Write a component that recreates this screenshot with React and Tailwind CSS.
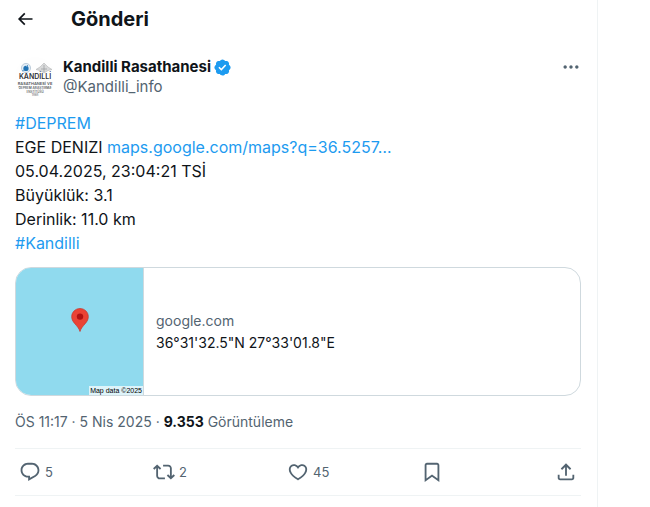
const ICONS = {
  back: "M7.414 13l5.043 5.04-1.414 1.42L3.586 12l7.457-7.46 1.414 1.42L7.414 11H21v2H7.414z",
  more: "M3 12c0-1.1.9-2 2-2s2 .9 2 2-.9 2-2 2-2-.9-2-2zm9 2c1.1 0 2-.9 2-2s-.9-2-2-2-2 .9-2 2 .9 2 2 2zm7 0c1.1 0 2-.9 2-2s-.9-2-2-2-2 .9-2 2 .9 2 2 2z",
  reply:
    "M1.751 10c0-4.42 3.584-8 8.005-8h4.366c4.49 0 8.129 3.64 8.129 8.13 0 2.96-1.607 5.68-4.196 7.11l-8.054 4.46v-3.69h-.067c-4.49.1-8.183-3.51-8.183-8.01zm8.005-6c-3.317 0-6.005 2.69-6.005 6 0 3.37 2.77 6.08 6.138 6.01l.351-.01h1.761v2.3l5.087-2.81c1.951-1.08 3.163-3.13 3.163-5.36 0-3.39-2.744-6.13-6.129-6.13H9.756z",
  repost:
    "M4.5 3.88l4.432 4.14-1.364 1.46L5.5 7.55V16c0 1.1.896 2 2 2H13v2H7.5c-2.209 0-4-1.79-4-4V7.55L1.432 9.48.068 8.02 4.5 3.88zM16.5 6H11V4h5.5c2.209 0 4 1.79 4 4v8.45l2.068-1.93 1.364 1.46-4.432 4.14-4.432-4.14 1.364-1.46 2.068 1.93V8c0-1.1-.896-2-2-2z",
  like: "M16.697 5.5c-1.222-.06-2.679.51-3.89 2.16l-.805 1.09-.806-1.09C9.984 6.01 8.526 5.44 7.304 5.5c-1.243.07-2.349.78-2.91 1.91-.552 1.12-.633 2.78.479 4.82 1.074 1.97 3.257 4.27 7.129 6.61 3.87-2.34 6.052-4.64 7.126-6.61 1.111-2.04 1.03-3.7.477-4.82-.561-1.13-1.666-1.84-2.908-1.91zm4.187 7.69c-1.351 2.48-4.001 5.12-8.379 7.67l-.503.3-.504-.3c-4.379-2.55-7.029-5.19-8.382-7.67-1.36-2.5-1.41-4.86-.514-6.67.887-1.79 2.647-2.91 4.601-3.01 1.651-.09 3.368.56 4.798 2.01 1.429-1.45 3.146-2.1 4.796-2.01 1.954.1 3.714 1.22 4.601 3.01.896 1.81.846 4.17-.514 6.67z",
  bookmark:
    "M4 4.5C4 3.12 5.119 2 6.5 2h11C18.881 2 20 3.12 20 4.5v18.44l-8-5.71-8 5.71V4.5zM6.5 4c-.276 0-.5.22-.5.5v14.56l6-4.29 6 4.29V4.5c0-.28-.224-.5-.5-.5h-11z",
  share:
    "M12 2.59l5.7 5.7-1.41 1.42L13 6.41V16h-2V6.41l-3.3 3.3-1.41-1.42L12 2.59zM21 15l-.02 3.51c0 1.38-1.12 2.49-2.5 2.49H5.5C4.11 21 3 19.88 3 18.5V15h2v3.5c0 .28.22.5.5.5h12.98c.28 0 .5-.22.5-.5L19 15h2z",
};

function Icon({ name, className }) {
  return (
    <svg viewBox="0 0 24 24" fill="currentColor" aria-hidden="true" className={className}>
      <path d={ICONS[name]} />
    </svg>
  );
}

function VerifiedBadge() {
  return (
    <svg viewBox="0 0 22 22" aria-hidden="true" className="size-[19px] shrink-0 fill-[#1d9bf0]">
      <path d="M20.396 11c-.018-.646-.215-1.275-.57-1.816-.354-.54-.852-.972-1.438-1.246.223-.607.27-1.264.14-1.897-.131-.634-.437-1.218-.882-1.687-.47-.445-1.053-.75-1.687-.882-.633-.13-1.29-.083-1.897.14-.273-.587-.704-1.086-1.245-1.44S11.647 1.62 11 1.604c-.646.017-1.273.213-1.813.568s-.969.854-1.24 1.44c-.608-.223-1.267-.272-1.902-.14-.635.13-1.22.436-1.69.882-.445.47-.749 1.055-.878 1.688-.13.633-.08 1.29.144 1.896-.587.274-1.087.705-1.443 1.245-.356.54-.555 1.17-.574 1.817.02.647.218 1.276.574 1.817.356.54.856.972 1.443 1.245-.224.606-.274 1.263-.144 1.896.13.634.433 1.218.877 1.688.47.443 1.054.747 1.687.878.633.132 1.29.084 1.897-.136.274.586.705 1.084 1.246 1.439.54.354 1.17.551 1.816.569.647-.016 1.276-.213 1.817-.567s.972-.854 1.245-1.44c.604.239 1.266.296 1.903.164.636-.132 1.22-.447 1.68-.907.46-.46.776-1.044.908-1.681s.075-1.299-.165-1.903c.586-.274 1.084-.705 1.439-1.246.354-.54.551-1.17.569-1.816zM9.662 14.85l-3.429-3.428 1.293-1.302 2.072 2.072 4.4-4.794 1.347 1.246z" />
    </svg>
  );
}

function Avatar() {
  return (
    <svg viewBox="0 0 40 40" aria-hidden="true" className="size-10 shrink-0 rounded-full">
      <rect width="40" height="40" fill="#fefefe" />
      <circle cx="11" cy="11" r="4.6" fill="#e3edf5" stroke="#b3c4d4" strokeWidth="0.8" />
      <circle cx="11" cy="11.4" r="2.6" fill="#2173b4" />
      <path d="M11 10l2-2M9 13l-2 1" stroke="#5f9bc9" strokeWidth="1" />
      <path d="M29 6l4 4 4 2.500-4 1-4 2.500-4-2.500-4-1 4-2.500z" fill="#d9dadb" stroke="#b5b7b9" strokeWidth="0.6" />
      <path d="M29 8v7M26 12h6" stroke="#999b9d" strokeWidth="0.7" />
      <g fill="#303236" textAnchor="middle" fontFamily="Inter, sans-serif" fontWeight="600">
        <text x="20" y="22.4" fontSize="7">KANDİLLİ</text>
        <text x="20" y="27.8" fontSize="4" fill="#55585c">RASATHANESİ VE</text>
        <text x="20" y="32" fontSize="3.2" fill="#55585c">DEPREM ARAŞTIRMA</text>
        <text x="20" y="35.6" fontSize="3" fill="#66696c">ENSTİTÜSÜ</text>
        <text x="20" y="39.2" fontSize="2.800" fill="#77797c">1868</text>
      </g>
    </svg>
  );
}

function MapPin() {
  return (
    <svg viewBox="0 0 18 24" aria-hidden="true" className="h-6 w-[18px]">
      <path
        d="M9 .5C4.300.5.700 4.200.700 8.700c0 2.500 1 4.400 2.700 6.500C6 18.200 8 20.200 9 23.500c1-3.300 3-5.300 5.600-8.300 1.700-2.100 2.700-4 2.700-6.500C17.300 4.200 13.700.5 9 .5z"
        fill="#ea4335"
        stroke="#c5382d"
        strokeWidth="0.7"
      />
      <circle cx="9" cy="8.600" r="3.200" fill="#b11313" />
    </svg>
  );
}

function Action({ icon, count, label }) {
  return (
    <div className="flex flex-1">
      <button type="button" aria-label={label} className="flex items-center gap-1 text-[13px] leading-4">
        <Icon name={icon} className="size-[22px]" />
        {count && <span>{count}</span>}
      </button>
    </div>
  );
}

export default function App() {
  return (
    <main className="min-h-screen max-w-[598px] border-r border-[#eff3f4] bg-white pr-4 pl-[15px] font-['Inter','Liberation_Sans',sans-serif] text-[#0f1419]">
      <header className="flex h-[38px] items-center gap-9">
        <button type="button" aria-label="Geri" className="flex">
          <Icon name="back" className="size-5" />
        </button>
        <h1 className="text-[20px] leading-6 font-bold">Gönderi</h1>
      </header>

      <article className="pt-[19px]">
        <div className="flex items-start gap-2">
          <Avatar />
          <div className="flex-1 leading-5">
            <div className="flex items-center gap-[2px]">
              <a href="#profil" className="text-[15px] font-bold">Kandilli Rasathanesi</a>
              <VerifiedBadge />
            </div>
            <a href="#profil" className="block text-[15px] text-[#536471]">@Kandilli_info</a>
          </div>
          <button type="button" aria-label="Daha fazla" className="flex text-[#536471]">
            <Icon name="more" className="size-5" />
          </button>
        </div>

        <p className="pt-[14px] text-[16px] leading-6">
          <a href="#deprem" className="text-[#1d9bf0]">#DEPREM</a>
          <br />
          EGE DENIZI <a href="#harita" className="text-[#1d9bf0]">maps.google.com/maps?q=36.5257…</a>
          <br />
          05.04.2025, 23:04:21 TSİ
          <br />
          Büyüklük: 3.1
          <br />
          Derinlik: 11.0 km
          <br />
          <a href="#kandilli" className="text-[#1d9bf0]">#Kandilli</a>
        </p>

        <a href="#harita" className="mt-3 flex overflow-hidden rounded-2xl border border-[#cfd9de]">
          <div className="relative flex h-[127px] w-32 shrink-0 items-center justify-center border-r border-[#cfd9de] bg-[#90daee] pb-6">
            <MapPin />
            <span className="absolute right-0 bottom-0 bg-white/70 px-px font-['Liberation_Sans',sans-serif] text-[7px] leading-[9px] text-black">
              Map data ©2025
            </span>
          </div>
          <div className="flex flex-col justify-center gap-[2px] px-3 text-[14px] leading-5">
            <span className="text-[#536471]">google.com</span>
            <span>36°31'32.5"N 27°33'01.8"E</span>
          </div>
        </a>

        <p className="py-4 text-[14px] leading-5 text-[#536471]">
          ÖS 11:17 · 5 Nis 2025 · <strong className="font-bold text-[#0f1419]">9.353</strong> Görüntüleme
        </p>

        <div className="flex h-12 items-center border-y border-[#eff3f4] px-1 text-[#536471]">
          <Action icon="reply" count="5" label="Yanıtla" />
          <Action icon="repost" count="2" label="Yeniden gönder" />
          <Action icon="like" count="45" label="Beğen" />
          <Action icon="bookmark" label="Yer işareti ekle" />
          <button type="button" aria-label="Paylaş" className="flex">
            <Icon name="share" className="size-[22px]" />
          </button>
        </div>
      </article>
    </main>
  );
}
